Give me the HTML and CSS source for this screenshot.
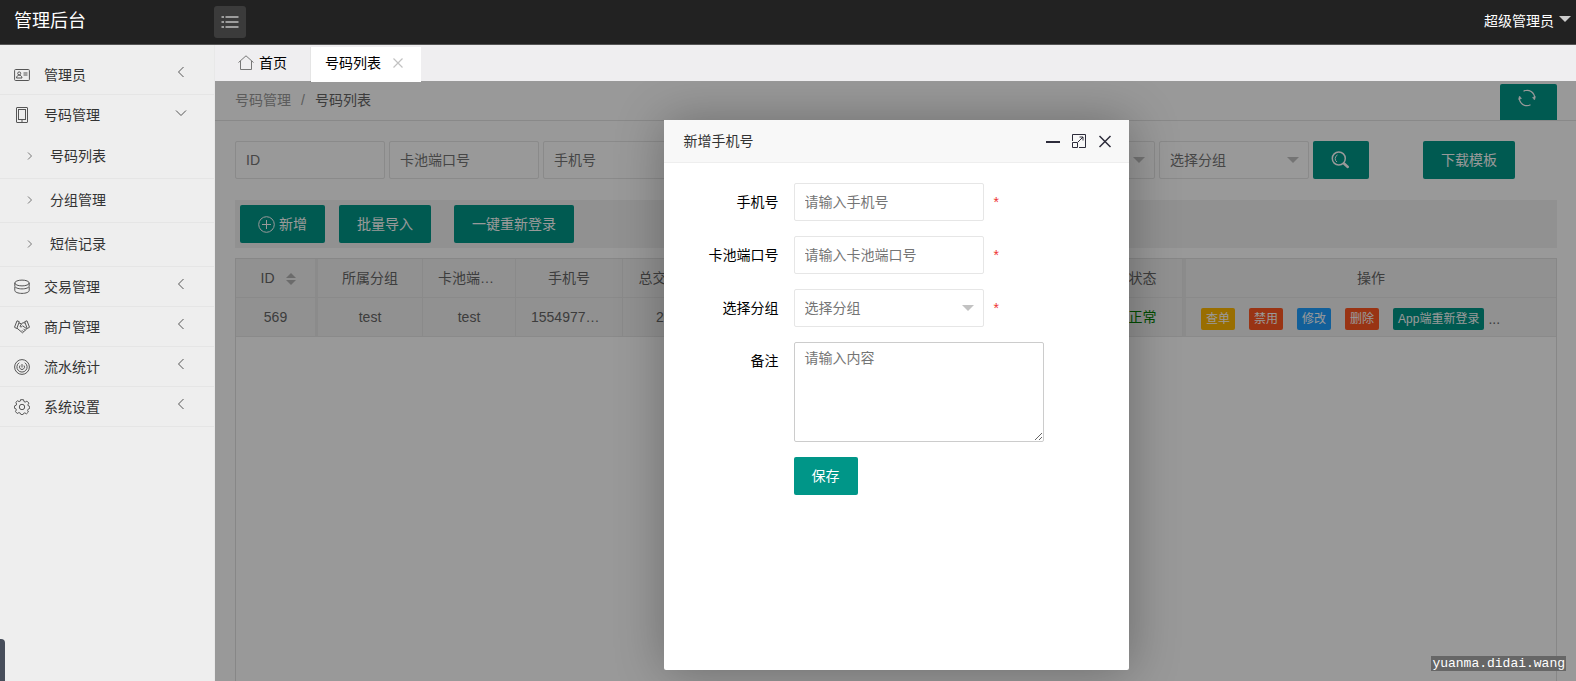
FILE: index.html
```html
<!DOCTYPE html>
<html lang="zh-CN">
<head>
<meta charset="utf-8">
<title>管理后台</title>
<link rel="stylesheet" href="styles.css">
</head>
<body>
<header class="topbar">
  <div class="brand">管理后台</div>
  <button class="menu-toggle" type="button" aria-label="折叠菜单">
    <svg width="18" height="14" viewBox="0 0 18 14" fill="none" stroke="#fff" stroke-width="1.200"><path d="M4.500 2h13M4.500 7h13M4.500 12h13M.5 2h2.500M.5 7h2.500M.5 12h2.500"/></svg>
  </button>
  <button class="user" type="button">超级管理员<span class="caret"></span></button>
</header>
<div class="body">
  <nav class="sidebar">
    <ul class="menu">
      <li><a class="item" href="#"><svg class="ico" viewBox="0 0 16 16"><rect x=".6" y="2.500" width="14.800" height="11" rx="1"/><circle cx="5.200" cy="6.400" r="1.500"/><path d="M2.500 11c.2-2 1.300-2.800 2.700-2.800S7.800 9 8 11zM9.500 6h4M9.500 8h4"/></svg><span>管理员</span><svg class="arrow" viewBox="0 0 12 12"><path d="M8.500 1 3.500 6l5 5"/></svg></a></li>
      <li class="open"><a class="item" href="#"><svg class="ico" viewBox="0 0 16 16"><rect x="2.500" y=".5" width="11" height="15" rx=".5"/><rect x="4.500" y="2.500" width="7" height="10"/><path d="M7 14h2"/></svg><span>号码管理</span><svg class="arrow" viewBox="0 0 12 12"><path d="m1 3.500 5 5 5-5"/></svg></a>
        <ul class="submenu">
          <li><a class="subitem" href="#"><svg class="chev" viewBox="0 0 10 10"><path d="m3 1.500 3.500 3.500L3 8.500"/></svg><span>号码列表</span></a></li>
          <li><a class="subitem" href="#"><svg class="chev" viewBox="0 0 10 10"><path d="m3 1.500 3.500 3.500L3 8.500"/></svg><span>分组管理</span></a></li>
          <li><a class="subitem" href="#"><svg class="chev" viewBox="0 0 10 10"><path d="m3 1.500 3.500 3.500L3 8.500"/></svg><span>短信记录</span></a></li>
        </ul>
      </li>
      <li><a class="item" href="#"><svg class="ico" viewBox="0 0 16 16"><ellipse cx="8" cy="4" rx="7.200" ry="2.900"/><path d="M.8 4v3c0 1.600 3.200 2.900 7.200 2.900s7.200-1.300 7.200-2.900V4M.8 8v3.500c0 1.600 3.200 2.900 7.200 2.900s7.200-1.300 7.200-2.900V8"/></svg><span>交易管理</span><svg class="arrow" viewBox="0 0 12 12"><path d="M8.500 1 3.500 6l5 5"/></svg></a></li>
      <li><a class="item" href="#"><svg class="ico" viewBox="0 0 16 16"><path d="M3 1.800 5.300 2.700 2.800 9.500.5 8.300zM13 1.800l-2.300.9 2.500 6.800 2.300-1.200zM5 4l2.500.8L6 7.500c1 .8 2 .2 2.600-.7l4.200 3L8.500 13.800 3 9.200M7.500 4.800 9 3.700l2 .3M9.500 12.800l-1.500-1.500M11 11.300 9.500 9.800"/></svg><span>商户管理</span><svg class="arrow" viewBox="0 0 12 12"><path d="M8.500 1 3.500 6l5 5"/></svg></a></li>
      <li><a class="item" href="#"><svg class="ico" viewBox="0 0 16 16"><circle cx="8" cy="8" r="7.400"/><path d="M5.200 3.700a5.100 5.100 0 1 0 5.600 0M8 5v3.500M6 6.500a2.500 2.500 0 1 0 4 0"/></svg><span>流水统计</span><svg class="arrow" viewBox="0 0 12 12"><path d="M8.500 1 3.500 6l5 5"/></svg></a></li>
      <li><a class="item" href="#"><svg class="ico" viewBox="0 0 16 16"><path d="m6.500.7 3 0 .5 1.900 1.200.5 1.700-1 2 2-1 1.700.5 1.200 1.300.4v2l-1.600.8-.5 1.200.8 1.600-1.900 1.800-1.700-.9-1.300.5-.5 1.200H7l-.7-1.400-1.400-.6-1.700.9-1.700-1.900.8-1.700-.5-1.200L.4 9.200V7l1.700-.7.5-1.300-.8-1.600 1.700-1.600 1.700.8 1.100-.5z"/><circle cx="8" cy="8" r="2.700"/></svg><span>系统设置</span><svg class="arrow" viewBox="0 0 12 12"><path d="M8.500 1 3.500 6l5 5"/></svg></a></li>
    </ul>
  </nav>
  <div class="workspace">
    <div class="tabs">
      <a class="tab home" href="#"><svg width="16" height="16" viewBox="0 0 16 16" fill="none" stroke="#777"><path d="M.5 7.500 8 .8l7.500 6.700M2.500 6v8.500h11V6"/></svg>首页</a>
      <a class="tab active" href="#">号码列表<svg width="10" height="10" viewBox="0 0 10 10" stroke="#c2c2c2" stroke-width="1.200"><path d="m.5.5 9 9M9.500.5l-9 9"/></svg></a>
    </div>
    <main class="page">
      <div class="crumbs">
        <div class="crumb-path"><a href="#">号码管理</a><span class="sep">/</span><span class="here">号码列表</span></div>
        <button class="refresh" type="button" aria-label="刷新"><svg width="18" height="18" viewBox="0 0 18 18" fill="none" stroke="#fff" stroke-width="1.200"><path d="M5.500 2.200A7.600 7.600 0 0 1 16.600 9.500M12.500 15.800A7.600 7.600 0 0 1 1.400 8.500M2.200 12.400A7.600 7.600 0 0 0 9.500 16.600M15.800 5.600A7.600 7.600 0 0 0 8.500 1.400"/><path d="m14.500 8.500 2 2.500.9-3.500zM3.500 9.500l-2-2.500-.9 3.500z" fill="#fff" stroke-width=".5"/></svg></button>
      </div>
      <div class="content">
        <form class="filters">
          <input class="field" type="text" placeholder="ID" aria-label="ID">
          <input class="field" type="text" placeholder="卡池端口号" aria-label="卡池端口号">
          <input class="field" type="text" placeholder="手机号" aria-label="手机号">
          <input class="field" type="text" aria-label="开始">
          <input class="field" type="text" aria-label="结束">
          <div class="picker"><select class="field" aria-label="状态"><option></option></select></div>
          <div class="picker"><select class="field" aria-label="选择分组"><option>选择分组</option></select></div>
          <button class="btn" type="button" aria-label="搜索"><svg width="20" height="18" viewBox="0 0 20 18" fill="none" stroke="#fff"><circle cx="7.800" cy="7.500" r="6.500" stroke-width="1.500"/><path d="M6 11A4 4 0 0 1 6.500 4"/><path d="m13 12.500 3.800 3.500" stroke-width="2.500" stroke-linecap="round"/></svg></button>
          <button class="btn download" type="button">下载模板</button>
        </form>
        <div class="toolbar">
          <button class="btn" type="button"><svg width="17" height="17" viewBox="0 0 17 17" fill="none" stroke="#fff"><circle cx="8.500" cy="8.500" r="7.800"/><path d="M8.500 4v9M4 8.500h9"/></svg>新增</button>
          <button class="btn import" type="button">批量导入</button>
          <button class="btn relogin" type="button">一键重新登录</button>
        </div>
        <div class="grid">
          <table>
            <colgroup><col class="c-id"><col class="c-group"><col class="c-port"><col class="c-phone"><col class="c-total"><col><col class="c-state"><col class="c-ops"></colgroup>
            <thead><tr><th class="pin-left">ID<span class="sort"></span></th><th>所属分组</th><th>卡池端口号</th><th>手机号</th><th>总交易金额</th><th></th><th>状态</th><th class="pin-right">操作</th></tr></thead>
            <tbody><tr><td class="pin-left">569</td><td>test</td><td>test</td><td>15549770000</td><td>200.0</td><td></td><td class="ok">正常</td><td class="pin-right"><div class="ops"><button class="mini amber" type="button">查单</button><button class="mini red" type="button">禁用</button><button class="mini blue" type="button">修改</button><button class="mini red" type="button">删除</button><button class="mini teal" type="button">App端重新登录</button><span class="more">...</span></div></td></tr></tbody>
          </table>
        </div>
      </div>
      <div class="shade"></div>
      <section class="dialog" role="dialog" aria-labelledby="dlg-title">
        <div class="dialog-head">
          <h2 id="dlg-title">新增手机号</h2>
          <button type="button" aria-label="最小化"><svg width="16" height="16" viewBox="0 0 16 16"><path d="M1 9h14" stroke="#2d2c3b" stroke-width="2"/></svg></button>
          <button type="button" aria-label="最大化"><svg width="16" height="16" viewBox="0 0 16 16" fill="none" stroke="#2d2c3b"><path d="M1.500 8V1.500h13v13H8M1.500 9.500h5v5h-5zM7 9l5-5M8.500 4H12v3.500"/></svg></button>
          <button type="button" aria-label="关闭"><svg width="16" height="16" viewBox="0 0 16 16" stroke="#2d2c3b" stroke-width="1.500"><path d="m2.500 3 11 11M13.500 3l-11 11"/></svg></button>
        </div>
        <form class="dialog-form">
          <label for="phone">手机号</label>
          <div class="control"><input id="phone" class="field" type="text" placeholder="请输入手机号"><span class="req">*</span></div>
          <label for="port">卡池端口号</label>
          <div class="control"><input id="port" class="field" type="text" placeholder="请输入卡池端口号"><span class="req">*</span></div>
          <label for="group">选择分组</label>
          <div class="control"><div class="picker"><select id="group" class="field"><option>选择分组</option></select></div><span class="req">*</span></div>
          <label for="note">备注</label>
          <div class="control"><textarea id="note" placeholder="请输入内容"></textarea></div>
          <button class="btn save" type="button">保存</button>
        </form>
      </section>
    </main>
  </div>
</div>
<div class="edge-handle"></div>
<div class="watermark">yuanma.didai.wang</div>
</body>
</html>
```

FILE: styles.css
```css
* { box-sizing: border-box; }
html, body { height: 100%; }
body {
  margin: 0;
  display: flex;
  flex-direction: column;
  overflow: hidden;
  font: 14px/24px "Liberation Sans", "Noto Sans CJK SC", sans-serif;
  color: #333;
  background: #fff;
}
a { color: inherit; text-decoration: none; }
ul { margin: 0; padding: 0; list-style: none; }
button, input, select, textarea { font: inherit; }
button { cursor: pointer; border: 0; background: none; }

.topbar {
  display: flex;
  align-items: center;
  flex: none;
  height: 45px;
  padding: 0 5px 0 14px;
  background: #222;
  border-bottom: 1px solid #555;
  color: #fff;
}
.brand { width: 200px; padding-bottom: 2px; font-size: 18px; }
.menu-toggle {
  display: grid;
  place-items: center;
  width: 32px;
  height: 32px;
  padding: 0;
  border-radius: 3px;
  background: #3b3b3b;
}
.user {
  display: flex;
  align-items: center;
  gap: 5px;
  margin-left: auto;
  padding: 0 0 2px;
  color: #fff;
}
.caret { border: 6px solid transparent; border-top-color: #ccc; border-bottom: 0; margin-bottom: 4px; }

.body { display: flex; flex: 1; min-height: 0; }
.sidebar { width: 215px; flex: none; padding-top: 10px; background: #eee; border-right: 1px solid #e8e8e8; }
.item {
  display: flex;
  align-items: center;
  height: 40px;
  padding: 0 27px 0 14px;
  border-bottom: 1px solid #e5e5e5;
}
.open .item { border-bottom: 0; }
.ico { width: 16px; height: 16px; margin-right: 14px; fill: none; stroke: #555; }
.arrow { width: 12px; height: 12px; margin: 0 0 5px auto; fill: none; stroke: #555; }
.subitem {
  display: flex;
  align-items: center;
  gap: 15px;
  height: 44px;
  padding: 0 0 2px 25px;
  border-bottom: 1px solid #e5e5e5;
}
.chev { width: 10px; height: 10px; fill: none; stroke: #777; }

.workspace { display: flex; flex-direction: column; flex: 1; min-width: 0; }
.tabs { display: flex; flex: none; height: 36px; padding-top: 2px; background: #efeef0; color: #000; }
.tab { display: flex; align-items: center; height: 35px; padding-bottom: 3px; }
.home { gap: 5px; padding-left: 23px; padding-right: 23px; border-right: 1px solid #e5e5e5; }
.active { z-index: 2; gap: 12px; padding-left: 14px; padding-right: 18px; background: #fff; }

.page { position: relative; display: flex; flex-direction: column; flex: 1; min-height: 0; overflow: hidden; }
.crumbs {
  display: flex;
  justify-content: space-between;
  align-items: flex-end;
  flex: none;
  height: 40px;
  padding: 0 19px 0 20px;
  border-bottom: 1px solid #e5e5e5;
}
.crumb-path { align-self: center; padding-bottom: 2px; color: #999; }
.sep { margin: 0 10px; }
.here { color: #666; }
.refresh {
  display: flex;
  justify-content: center;
  width: 57px;
  height: 36px;
  padding: 5px 3px 0 0;
  border-radius: 2px 2px 0 0;
  background: #009688;
}
.content { display: flex; flex-direction: column; flex: 1; min-height: 0; padding: 20px 19px 0 20px; }
.filters { display: flex; gap: 4px; margin-bottom: 21px; }
.field {
  width: 150px;
  height: 38px;
  padding: 0 10px;
  border: 1px solid #e6e6e6;
  border-radius: 2px;
  background: #fff;
  color: #757575;
}
::placeholder { color: #757575; opacity: 1; }
select.field { appearance: none; display: block; }
.picker { position: relative; }
.picker::after {
  content: "";
  position: absolute;
  top: 16px;
  right: 10px;
  border: 6px solid transparent;
  border-top-color: #c2c2c2;
  border-bottom: 0;
  pointer-events: none;
}
.btn {
  display: flex;
  align-items: center;
  gap: 4px;
  height: 38px;
  padding: 0 18px;
  border-radius: 2px;
  background: #009688;
  color: #fff;
}
.download { margin-left: 50px; }
.toolbar { display: flex; padding: 5px; background: #f2f2f2; }
.import { margin-left: 14px; }
.relogin { margin-left: 23px; }

.grid { flex: 1; margin-top: 10px; border: 1px solid #e2e2e2; border-bottom: 0; }
table { width: 100%; table-layout: fixed; border-collapse: separate; border-spacing: 0; color: #666; }
th, td {
  height: 39px;
  padding: 0 15px;
  border-right: 1px solid #e6e6e6;
  border-bottom: 1px solid #e6e6e6;
  background: #f2f2f2;
  font-weight: 400;
  text-align: center;
  white-space: nowrap;
  overflow: hidden;
  text-overflow: ellipsis;
}
.c-id { width: 82px; }
.c-group { width: 105px; }
.c-port { width: 93px; }
.c-phone { width: 107px; }
.c-total { width: 102px; }
.c-state { width: 80px; }
.c-ops { width: 373px; }
.pin-left { border-right: 3px solid #e8e8e8; }
.pin-right { border-left: 3px solid #e8e8e8; border-right: 0; }
.sort { display: inline-grid; gap: 2px; margin-left: 11px; vertical-align: middle; }
th.pin-left { padding-right: 10px; }
.sort::before, .sort::after { content: ""; border: 5px solid transparent; }
.sort::before { border-bottom-color: #b2b2b2; border-top: 0; }
.sort::after { border-top-color: #b2b2b2; border-bottom: 0; }
td.ok { color: green; }
.ops { display: flex; gap: 14px; padding-top: 3px; }
.mini { height: 22px; padding: 0 5px; border-radius: 2px; color: #fff; font-size: 12px; line-height: 22px; }
.more { margin-left: -10px; line-height: 22px; }
.amber { background: #ffb800; }
.red { background: #ff5722; }
.blue { background: #1e9fff; }
.teal { background: #009688; }

.shade { position: absolute; inset: 0; background: rgba(0, 0, 0, .4); }
.dialog {
  position: absolute;
  top: 39px;
  left: calc(50% - 232px);
  width: 465px;
  height: 550px;
  border-radius: 2px;
  background: #fff;
  box-shadow: 1px 1px 50px rgba(0, 0, 0, .3);
}
.dialog-head {
  display: flex;
  align-items: center;
  gap: 10px;
  height: 43px;
  padding: 0 16px 0 20px;
  border-bottom: 1px solid #eee;
  background: #f8f8f8;
}
.dialog-head h2 { flex: 1; margin: 0; font-size: 14px; font-weight: 400; line-height: 24px; }
.dialog-head button { display: flex; padding: 0; }
.dialog-form { display: grid; grid-template-columns: 115px 1fr; gap: 15px; padding-top: 20px; color: #000; }
.dialog-form label { padding-top: 7px; text-align: right; }
.dialog-form .field { width: 190px; }
.control { display: flex; align-items: center; gap: 10px; }
.req { color: #e33; }
textarea {
  display: block;
  width: 250px;
  height: 100px;
  padding: 3px 10px;
  border: 1px solid #ccc;
  border-radius: 2px;
  resize: both;
}
.save { grid-column: 2; justify-self: start; }

.edge-handle { position: fixed; left: 0; bottom: 0; width: 5px; height: 42px; border-radius: 0 4px 0 0; background: #474d5a; }
.watermark {
  position: fixed;
  right: 10px;
  bottom: 10px;
  padding: 0 1px;
  background: #666;
  color: #fff;
  font: 13px/15px "Liberation Mono", monospace;
}
```
